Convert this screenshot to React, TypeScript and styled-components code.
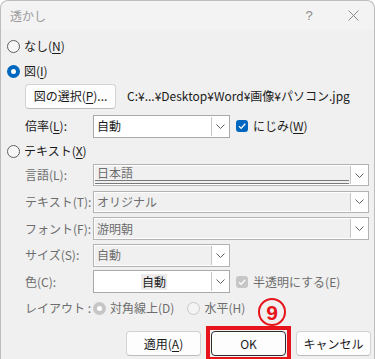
import styled, { createGlobalStyle, css } from "styled-components";

const GlobalStyle = createGlobalStyle`
  html, body {
    margin: 0;
    padding: 0;
    background: #ffffff;
  }
  body {
    font-family: "Noto Sans CJK JP", "Noto Sans", sans-serif;
    font-size: 12px;
    color: #1b1b1b;
  }
  * {
    box-sizing: border-box;
  }
`;

const Window = styled.div`
  position: relative;
  width: 375px;
  height: 359px;
  overflow: hidden;
  background: #f0f0f0;
  border: 1px solid #bdbdbd;
  border-bottom: none;
  border-radius: 8px 8px 0 0;
`;

const TitleBar = styled.div`
  display: flex;
  align-items: center;
  height: 29px;
  padding-left: 9px;
  background: #f3f3f3;
  color: #9b9b9b;
  border-radius: 8px 8px 0 0;
`;

const TitleText = styled.span`
  flex: 1;
  line-height: 16px;
`;

const CaptionButton = styled.div<{ $w: number }>`
  width: ${(p) => p.$w}px;
  height: 29px;
  display: flex;
  align-items: center;
  justify-content: center;
  color: #8a8a8a;
  font-family: "Liberation Sans", sans-serif;
  font-size: 13px;
`;

const Body = styled.div`
  display: flex;
  flex-direction: column;
  padding: 4px 3px 0 6px;
`;

const Row = styled.div<{ $h: number; $mt?: number; $indent?: number }>`
  display: flex;
  align-items: center;
  height: ${(p) => p.$h}px;
  margin-top: ${(p) => p.$mt ?? 0}px;
  padding-left: ${(p) => p.$indent ?? 0}px;
  line-height: 16px;
`;

const Label = styled.span<{ $disabled?: boolean }>`
  width: 68px;
  flex: none;
  white-space: nowrap;
  color: ${(p) => (p.$disabled ? "#6d6d6d" : "#1b1b1b")};
`;

const Key = styled.span`
  text-decoration: underline;
  text-underline-offset: 2px;
`;

const RadioDot = styled.span<{ $checked?: boolean; $disabled?: boolean }>`
  width: 13px;
  height: 13px;
  flex: none;
  border-radius: 50%;
  display: flex;
  align-items: center;
  justify-content: center;
  ${(p) =>
    p.$checked
      ? css`
          background: ${p.$disabled ? "#c6c6c6" : "#0067c0"};
          &::after {
            content: "";
            width: 5px;
            height: 5px;
            border-radius: 50%;
            background: #ffffff;
          }
        `
      : css`
          border: 1px solid ${p.$disabled ? "#c8c8c8" : "#5f5f5f"};
          background: ${p.$disabled ? "#f4f4f4" : "#f7f7f7"};
        `}
`;

const RadioText = styled.span<{ $disabled?: boolean }>`
  margin-left: 4px;
  white-space: nowrap;
  color: ${(p) => (p.$disabled ? "#6d6d6d" : "#1b1b1b")};
`;

const OptionGroup = styled.div`
  display: flex;
  align-items: center;
  gap: 13px;
`;

const Option = styled.div`
  display: flex;
  align-items: center;
`;

const Button = styled.button<{ $w: number; $default?: boolean }>`
  width: ${(p) => p.$w}px;
  height: 25px;
  padding: 0;
  font-family: inherit;
  font-size: 12px;
  line-height: 16px;
  color: #1b1b1b;
  background: #fdfdfd;
  border: 1px solid #d2d2d2;
  border-bottom-color: #bcbcbc;
  border-radius: 4px;
  ${(p) =>
    p.$default &&
    css`
      border-color: #2e2e2e;
    `}
`;

/* red annotation frame drawn round the OK button */
const MarkFrame = styled.div`
  display: flex;
  margin: -5px;
  padding: 1px;
  border: 4px solid #e8141c;
`;

const PathText = styled.span`
  margin-left: 11px;
  white-space: nowrap;
`;

const Combo = styled.div<{ $w: number; $h?: number; $disabled?: boolean }>`
  display: flex;
  flex: none;
  width: ${(p) => p.$w}px;
  height: ${(p) => p.$h ?? 23}px;
  border: 1px solid ${(p) => (p.$disabled ? "#b3b3b3" : "#a9a9a9")};
  background: ${(p) => (p.$disabled ? "#f0f0f0" : "#ffffff")};
  box-shadow: ${(p) => (p.$disabled ? "inset 0 0 0 1px #ffffff" : "none")};
  color: ${(p) => (p.$disabled ? "#6d6d6d" : "#1b1b1b")};
`;

const ComboText = styled.div<{ $center?: boolean; $underline?: boolean }>`
  flex: 1;
  display: flex;
  align-items: center;
  justify-content: ${(p) => (p.$center ? "center" : "flex-start")};
  padding-left: 3px;
  ${(p) =>
    p.$underline &&
    css`
      border-bottom: 4px double #7a7a7a;
      margin: 0 1px 1px 1px;
      padding-left: 2px;
    `}
`;

const Highlight = styled.span`
  background: #ececec;
  padding: 0 1px;
`;

const ComboButton = styled.div`
  width: 17px;
  flex: none;
  display: flex;
  align-items: center;
  justify-content: center;
  background: #ffffff;
  border-left: 1px solid #c6c6c6;
  margin: 1px 1px 1px 0;
`;

const CheckBox = styled.span<{ $disabled?: boolean }>`
  width: 12px;
  height: 12px;
  flex: none;
  margin-left: 6px;
  border-radius: 3px;
  display: flex;
  align-items: center;
  justify-content: center;
  background: ${(p) => (p.$disabled ? "#c6c6c6" : "#0067c0")};
`;

const CheckText = styled.span<{ $disabled?: boolean }>`
  margin-left: 5px;
  white-space: nowrap;
  color: ${(p) => (p.$disabled ? "#6d6d6d" : "#1b1b1b")};
`;

const ButtonRow = styled.div`
  display: flex;
  justify-content: flex-end;
  gap: 10px;
  margin-top: 10px;
`;

const StepMark = styled.div`
  position: absolute;
  left: 257px;
  top: 297px;
  width: 28px;
  height: 28px;
  border: 2.5px solid #e8141c;
  border-radius: 50%;
  display: flex;
  align-items: center;
  justify-content: center;
  color: #e8141c;
  font-family: "Liberation Sans", sans-serif;
  font-weight: bold;
  font-size: 21px;
  line-height: 1;
`;

function Chevron() {
  return (
    <svg width="9" height="5" viewBox="0 0 9 5">
      <polyline points="0.5,0.5 4.5,4.5 8.5,0.5" fill="none" stroke="#5f5f5f" strokeWidth="1" />
    </svg>
  );
}

function CheckMark() {
  return (
    <svg width="10" height="10" viewBox="0 0 10 10">
      <polyline points="2,5.2 4.2,7.4 8.2,2.8" fill="none" stroke="#ffffff" strokeWidth="1.3" />
    </svg>
  );
}

function CloseIcon() {
  return (
    <svg width="11" height="11" viewBox="0 0 11 11">
      <path d="M0.5 0.5 L10.5 10.5 M10.5 0.5 L0.5 10.5" stroke="#8a8a8a" strokeWidth="1" />
    </svg>
  );
}

interface DropDownProps {
  value: string;
  width: number;
  height?: number;
  disabled?: boolean;
  center?: boolean;
  underline?: boolean;
}

function DropDown({ value, width, height, disabled, center, underline }: DropDownProps) {
  return (
    <Combo $w={width} $h={height} $disabled={disabled}>
      <ComboText $center={center} $underline={underline}>
        {center ? <Highlight>{value}</Highlight> : value}
      </ComboText>
      <ComboButton>
        <Chevron />
      </ComboButton>
    </Combo>
  );
}

export default function App() {
  return (
    <>
      <GlobalStyle />
      <Window>
        <TitleBar>
          <TitleText>透かし</TitleText>
          <CaptionButton $w={46}>?</CaptionButton>
          <CaptionButton $w={42}>
            <CloseIcon />
          </CaptionButton>
        </TitleBar>
        <Body>
          <Row $h={24}>
            <RadioDot />
            <RadioText>
              なし(<Key>N</Key>)
            </RadioText>
          </Row>
          <Row $h={26}>
            <RadioDot $checked />
            <RadioText>
              図(<Key>I</Key>)
            </RadioText>
          </Row>
          <Row $h={24} $indent={18}>
            <Button $w={91}>
              図の選択(<Key>P</Key>)...
            </Button>
            <PathText>C:¥...¥Desktop¥Word¥画像¥パソコン.jpg</PathText>
          </Row>
          <Row $h={36} $indent={18}>
            <Label>
              倍率(<Key>L</Key>):
            </Label>
            <DropDown value="自動" width={137} />
            <CheckBox>
              <CheckMark />
            </CheckBox>
            <CheckText>
              にじみ(<Key>W</Key>)
            </CheckText>
          </Row>
          <Row $h={14}>
            <RadioDot />
            <RadioText>
              テキスト(<Key>X</Key>)
            </RadioText>
          </Row>
          <Row $h={26} $mt={4} $indent={18}>
            <Label $disabled>言語(L):</Label>
            <DropDown value="日本語" width={276} height={22} disabled underline />
          </Row>
          <Row $h={27} $indent={18}>
            <Label $disabled>テキスト(T):</Label>
            <DropDown value="オリジナル" width={276} height={22} disabled />
          </Row>
          <Row $h={27} $indent={18}>
            <Label $disabled>フォント(F):</Label>
            <DropDown value="游明朝" width={276} height={23} disabled />
          </Row>
          <Row $h={26} $indent={18}>
            <Label $disabled>サイズ(S):</Label>
            <DropDown value="自動" width={137} disabled />
          </Row>
          <Row $h={27} $indent={18}>
            <Label $disabled>色(C):</Label>
            <DropDown value="自動" width={137} center />
            <CheckBox $disabled>
              <CheckMark />
            </CheckBox>
            <CheckText $disabled>半透明にする(E)</CheckText>
          </Row>
          <Row $h={26} $indent={18}>
            <Label $disabled>レイアウト :</Label>
            <OptionGroup>
              <Option>
                <RadioDot $checked $disabled />
                <RadioText $disabled>対角線上(D)</RadioText>
              </Option>
              <Option>
                <RadioDot $disabled />
                <RadioText $disabled>水平(H)</RadioText>
              </Option>
            </OptionGroup>
          </Row>
          <ButtonRow>
            <Button $w={75}>
              適用(<Key>A</Key>)
            </Button>
            <MarkFrame>
              <Button $w={75} $default>
                OK
              </Button>
            </MarkFrame>
            <Button $w={75}>キャンセル</Button>
          </ButtonRow>
        </Body>
        <StepMark>9</StepMark>
      </Window>
    </>
  );
}
